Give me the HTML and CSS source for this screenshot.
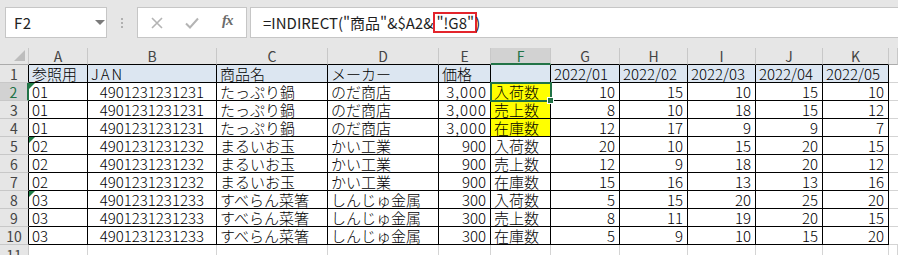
FILE: index.html
```html
<!DOCTYPE html>
<html lang="ja">
<head>
<meta charset="utf-8">
<link rel="stylesheet" href="styles.css">
</head>
<body>
<div class="topbar">
  <div class="namebox"><span class="nb-text">F2</span><span class="nb-arrow"></span></div>
  <div class="grip"><i></i><i></i><i></i></div>
  <div class="fxbox">
    <svg class="ic-x" width="12" height="12" viewBox="0 0 12 12"><path d="M1 1L11 11M11 1L1 11" stroke="#b4b4b4" stroke-width="1.6" fill="none"/></svg>
    <svg class="ic-ok" width="14" height="12" viewBox="0 0 14 12"><path d="M1 6.5L5 10.5L13 1.5" stroke="#b4b4b4" stroke-width="2" fill="none"/></svg>
    <span class="ic-fx">fx</span>
  </div>
  <div class="formula">=INDIRECT("商品"&amp;$A2&amp;<span class="hl">"!G8"</span>)</div>
</div>
<div class="sheet">
  <div class="ch corner"><span class="corner-tri"></span></div>
  <div class="ch t">A</div><div class="ch t">B</div><div class="ch t">C</div><div class="ch t">D</div><div class="ch t">E</div><div class="ch t sel">F</div><div class="ch t">G</div><div class="ch t">H</div><div class="ch t">I</div><div class="ch t">J</div><div class="ch t">K</div><div class="ch"></div>

  <div class="rh t">1</div>
  <div class="c hd">参照用</div><div class="c hd n">JAN</div><div class="c hd">商品名</div><div class="c hd">メーカー</div><div class="c hd">価格</div><div class="c hd"></div><div class="c hd">2022/01</div><div class="c hd">2022/02</div><div class="c hd">2022/03</div><div class="c hd">2022/04</div><div class="c hd">2022/05</div><div class="g"></div>

  <div class="rh t rsel">2</div>
  <div class="c tri">01</div><div class="c jan">4901231231231</div><div class="c">たっぷり鍋</div><div class="c">のだ商店</div><div class="c r p">3,000</div><div class="c y active">入荷数<span class="handle"></span></div><div class="c r">10</div><div class="c r">15</div><div class="c r">10</div><div class="c r">15</div><div class="c r">10</div><div class="g"></div>

  <div class="rh t">3</div>
  <div class="c">01</div><div class="c jan">4901231231231</div><div class="c">たっぷり鍋</div><div class="c">のだ商店</div><div class="c r p">3,000</div><div class="c y">売上数</div><div class="c r">8</div><div class="c r">10</div><div class="c r">18</div><div class="c r">15</div><div class="c r">12</div><div class="g"></div>

  <div class="rh t">4</div>
  <div class="c">01</div><div class="c jan">4901231231231</div><div class="c">たっぷり鍋</div><div class="c">のだ商店</div><div class="c r p">3,000</div><div class="c y">在庫数</div><div class="c r">12</div><div class="c r">17</div><div class="c r">9</div><div class="c r">9</div><div class="c r">7</div><div class="g"></div>

  <div class="rh t">5</div>
  <div class="c tri">02</div><div class="c jan">4901231231232</div><div class="c">まるいお玉</div><div class="c">かい工業</div><div class="c r">900</div><div class="c">入荷数</div><div class="c r">20</div><div class="c r">10</div><div class="c r">15</div><div class="c r">20</div><div class="c r">15</div><div class="g"></div>

  <div class="rh t">6</div>
  <div class="c">02</div><div class="c jan">4901231231232</div><div class="c">まるいお玉</div><div class="c">かい工業</div><div class="c r">900</div><div class="c">売上数</div><div class="c r">12</div><div class="c r">9</div><div class="c r">18</div><div class="c r">20</div><div class="c r">12</div><div class="g"></div>

  <div class="rh t">7</div>
  <div class="c">02</div><div class="c jan">4901231231232</div><div class="c">まるいお玉</div><div class="c">かい工業</div><div class="c r">900</div><div class="c">在庫数</div><div class="c r">15</div><div class="c r">16</div><div class="c r">13</div><div class="c r">13</div><div class="c r">16</div><div class="g"></div>

  <div class="rh t">8</div>
  <div class="c tri">03</div><div class="c jan">4901231231233</div><div class="c">すべらん菜箸</div><div class="c">しんじゅ金属</div><div class="c r">300</div><div class="c">入荷数</div><div class="c r">5</div><div class="c r">15</div><div class="c r">20</div><div class="c r">25</div><div class="c r">20</div><div class="g"></div>

  <div class="rh t">9</div>
  <div class="c">03</div><div class="c jan">4901231231233</div><div class="c">すべらん菜箸</div><div class="c">しんじゅ金属</div><div class="c r">300</div><div class="c">売上数</div><div class="c r">8</div><div class="c r">11</div><div class="c r">19</div><div class="c r">20</div><div class="c r">15</div><div class="g"></div>

  <div class="rh t">10</div>
  <div class="c">03</div><div class="c jan">4901231231233</div><div class="c">すべらん菜箸</div><div class="c">しんじゅ金属</div><div class="c r">300</div><div class="c">在庫数</div><div class="c r">5</div><div class="c r">9</div><div class="c r">10</div><div class="c r">15</div><div class="c r">20</div><div class="g"></div>

  <div class="rh last">11</div>
  <div class="g2"></div><div class="g2"></div><div class="g2"></div><div class="g2"></div><div class="g2"></div><div class="g2"></div><div class="g2"></div><div class="g2"></div><div class="g2"></div><div class="g2"></div><div class="g2"></div><div class="g2"></div>
</div>
</body>
</html>
```
FILE: styles.css
```css
* { box-sizing: border-box; }
html, body { margin: 0; padding: 0; }
body {
  width: 898px;
  height: 255px;
  overflow: hidden;
  background: #e6e6e6;
  font-family: "Noto Sans CJK JP", "Noto Sans", sans-serif;
}
.topbar {
  height: 48px;
  display: flex;
  align-items: flex-start;
  padding-top: 7px;
  padding-left: 5px;
}
.namebox {
  width: 102px;
  height: 31px;
  background: #fff;
  border: 1px solid #c6c6c6;
  position: relative;
  display: flex;
  align-items: center;
}
.nb-text {
  margin-left: 8px;
  font-size: 15px;
  color: #222;
  line-height: 1;
  letter-spacing: 0.5px;
}
.nb-arrow {
  position: absolute;
  left: 89px;
  top: 12px;
  width: 0; height: 0;
  border-left: 5px solid transparent;
  border-right: 5px solid transparent;
  border-top: 5px solid #7a7a7a;
}
.grip {
  width: 30px;
  height: 31px;
  display: flex;
  flex-direction: column;
  align-items: center;
  justify-content: center;
  gap: 2px;
  padding-right: 1px;
}
.grip i {
  display: block;
  width: 2px;
  height: 2px;
  background: #b0b0b0;
}
.fxbox {
  width: 110px;
  height: 31px;
  background: #fff;
  border: 1px solid #c6c6c6;
  position: relative;
}
.ic-x { position: absolute; left: 13px; top: 9px; }
.ic-ok { position: absolute; left: 47px; top: 9px; }
.ic-fx {
  position: absolute;
  left: 84px;
  top: 4px;
  font-family: "Liberation Serif", serif;
  font-style: italic;
  font-weight: bold;
  font-size: 15px;
  color: #6b6b6b;
  letter-spacing: -1px;
}
.formula {
  flex: 1;
  margin-left: 3px;
  height: 31px;
  background: #fff;
  border: 1px solid #c6c6c6;
  border-right: none;
  padding-left: 12px;
  font-size: 15px;
  line-height: 29px;
  color: #1e1e1e;
  white-space: nowrap;
}
.hl {
  display: inline-block;
  line-height: 17px;
  outline: 2px solid #e3242b;
  outline-offset: 0px;
  padding: 0 1px 0 1px;
  margin-left: 2px;
}

.sheet {
  display: grid;
  grid-template-columns: 29px 59px 129px 111px 111px 52px 60px 69px 68px 68px 67px 66px 1fr;
  grid-template-rows: 17px repeat(10, 18px) 20px;
  background: #fff;
}
.ch {
  background: #e6e6e6;
  border-right: 1px solid #c8c8c8;
  border-bottom: 1px solid #ababab;
  font-size: 14px;
  color: #444;
  text-align: center;
  line-height: 16px;
  position: relative;
}
.ch.t { border-bottom-color: #000; }
.ch.corner { border-bottom-color: #ababab; }
.corner-tri {
  position: absolute;
  right: 3px;
  bottom: 3px;
  width: 0; height: 0;
  border-left: 11px solid transparent;
  border-bottom: 11px solid #bdbdbd;
}
.ch.sel {
  background: #d2d2d2;
  color: #217346;
  border-bottom: 2px solid #217346;
}
.rh {
  background: #e6e6e6;
  border-right: 1px solid #000;
  border-bottom: 1px solid #c8c8c8;
  font-size: 14px;
  color: #444;
  text-align: center;
  line-height: 18px;
}
.rh.rsel {
  background: #d2d2d2;
  color: #217346;
  border-right: 2px solid #217346;
}
.rh.last {
  border-right-color: #c8c8c8;
  border-bottom: none;
  line-height: 20px;
}
.c {
  border-right: 1px solid #000;
  border-bottom: 1px solid #000;
  font-size: 15px;
  font-weight: 300;
  line-height: 17px;
  padding: 0 3px;
  color: #000;
  white-space: nowrap;
  position: relative;
}
.c.n { letter-spacing: 2px; }
.c.p { letter-spacing: 1px; }
.c.hd { background: #dce6f1; }
.c.r { text-align: right; padding-right: 4px; }
.c.r.p { padding-right: 3px; }
.c.jan { text-align: right; padding-right: 12px; }
.c.y { background: #ffff00; }
.c.tri::before {
  content: "";
  position: absolute;
  left: 0;
  top: 0;
  width: 0; height: 0;
  border-top: 6px solid #1e7b45;
  border-right: 6px solid transparent;
}
.c.active {
  outline: 2px solid #217346;
  outline-offset: -1px;
  z-index: 2;
}
.handle {
  position: absolute;
  right: -4px;
  bottom: -4px;
  width: 7px;
  height: 7px;
  background: #217346;
  border: 1px solid #fff;
}
.g {
  border-bottom: 1px solid #d4d4d4;
}
.g2 {
  border-right: 1px solid #d4d4d4;
}
```
